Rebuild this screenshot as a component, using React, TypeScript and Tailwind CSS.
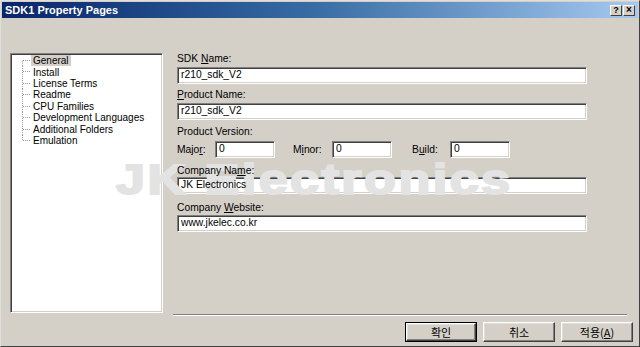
import React from "react";

const treeItems = [
  "General",
  "Install",
  "License Terms",
  "Readme",
  "CPU Families",
  "Development Languages",
  "Additional Folders",
  "Emulation",
];

function Field({ value, w }: { value: string; w: string }) {
  return (
    <div
      className={`${w} h-[17px] bg-white border border-t-[#808080] border-l-[#808080] border-r-white border-b-white shadow-[inset_1px_1px_0_#404040,inset_-1px_-1px_0_#d4d0c8] flex items-center pl-[3px]`}
    >
      <span className="relative z-10 text-[10.3px] leading-none text-black whitespace-nowrap">{value}</span>
    </div>
  );
}

function Label({ children, cls }: { children: React.ReactNode; cls: string }) {
  return (
    <div className={`${cls} h-[13px] leading-[13px] text-[10.3px] text-black`}>
      <span className="relative z-10 whitespace-nowrap">{children}</span>
    </div>
  );
}

function Btn({ children, def }: { children: React.ReactNode; def?: boolean }) {
  return (
    <div
      className={
        def
          ? "w-[72px] h-[20px] border border-black flex"
          : "w-[72px] h-[20px] flex"
      }
    >
      <div className="flex-1 border border-t-white border-l-white border-r-[#404040] border-b-[#404040] shadow-[inset_-1px_-1px_0_#808080,inset_1px_1px_0_#dfdfdf] flex items-center justify-center">
        <span className="relative z-10 text-[11px] leading-none text-black font-['Noto_Sans_CJK_KR','Liberation_Sans',sans-serif]">
          {children}
        </span>
      </div>
    </div>
  );
}

export default function App() {
  return (
    <div className="relative w-[640px] h-[347px] overflow-hidden bg-[#d4d0c8] border border-t-[#dfdfdf] border-l-[#dfdfdf] border-r-[#404040] border-b-[#404040] p-[1px] flex flex-col font-['Liberation_Sans',Arial,'Noto_Sans_CJK_KR',sans-serif]">
      {/* Title bar */}
      <div className="h-[16px] shrink-0 bg-gradient-to-r from-[#0a246a] via-[#3a6ea5] to-[#a6caf0] flex items-center justify-between pl-[3px] pr-[3px]">
        <span className="text-white font-bold text-[11px] leading-none">SDK1 Property Pages</span>
        <div className="flex gap-[1px]">
          <div className="w-[12px] h-[11px] bg-[#d4d0c8] border border-t-white border-l-white border-r-[#404040] border-b-[#404040] flex items-center justify-center text-[9px] font-bold leading-none text-black">?</div>
          <div className="w-[12px] h-[11px] bg-[#d4d0c8] border border-t-white border-l-white border-r-[#404040] border-b-[#404040] flex items-center justify-center text-[10px] font-bold leading-none text-black">×</div>
        </div>
      </div>

      {/* Body */}
      <div className="mt-[34px] flex items-start">
        {/* Tree */}
        <div className="mt-[1px] ml-[8px] w-[153px] h-[260px] shrink-0 bg-white border border-t-[#808080] border-l-[#808080] border-r-white border-b-white shadow-[inset_1px_1px_0_#404040,inset_-1px_-1px_0_#d4d0c8] pt-[1px] pl-[11px]">
          {treeItems.map((t, i) => (
            <div key={t} className="h-[11.43px] flex items-center">
              <svg width="9" height="11.43" className="shrink-0">
                <line
                  x1="0.5"
                  y1={i === 0 ? 5.7 : 0}
                  x2="0.5"
                  y2={i === treeItems.length - 1 ? 5.7 : 11.43}
                  stroke="#9a9a9a"
                  strokeWidth="1"
                  strokeDasharray="1 1"
                />
                <line x1="1" y1="5.5" x2="8" y2="5.5" stroke="#9a9a9a" strokeWidth="1" strokeDasharray="1 1" />
              </svg>
              <span
                className={
                  i === 0
                    ? "relative z-10 px-[2px] bg-[#d4d0c8] text-[10px] leading-[11px] text-black whitespace-nowrap"
                    : "relative z-10 px-[2px] text-[10px] leading-[11px] text-black whitespace-nowrap"
                }
              >
                {t}
              </span>
            </div>
          ))}
        </div>

        {/* Right column */}
        <div className="ml-[10px] w-[454px] h-[264px] flex flex-col">
          <div className="pl-[4px] flex flex-col">
            <Label cls="">
              SDK <span className="underline">N</span>ame:
            </Label>
            <div className="mt-[2px]">
              <Field value="r210_sdk_V2" w="w-[410px]" />
            </div>
            <Label cls="mt-[4px]">
              <span className="underline">P</span>roduct Name:
            </Label>
            <div className="mt-[2px]">
              <Field value="r210_sdk_V2" w="w-[410px]" />
            </div>
            <Label cls="mt-[5px]">Product Version:</Label>
            <div className="mt-[3px] flex items-center">
              <Label cls="w-[38px]">
                Majo<span className="underline">r</span>:
              </Label>
              <Field value="0" w="w-[60px]" />
              <Label cls="ml-[18px] w-[39px]">
                M<span className="underline">i</span>nor:
              </Label>
              <Field value="0" w="w-[60px]" />
              <Label cls="ml-[20px] w-[38px]">
                B<span className="underline">u</span>ild:
              </Label>
              <Field value="0" w="w-[60px]" />
            </div>
            <Label cls="mt-[6px]">
              Company Na<span className="underline">m</span>e:
            </Label>
            <div>
              <Field value="JK Electronics" w="w-[410px]" />
            </div>
            <Label cls="mt-[7px]">
              Company <span className="underline">W</span>ebsite:
            </Label>
            <div className="mt-[1px]">
              <Field value="www.jkelec.co.kr" w="w-[410px]" />
            </div>
          </div>
          <div className="mt-auto h-[2px] border-t border-t-[#808080] border-b border-b-white" />
        </div>
      </div>

      {/* Buttons */}
      <div className="mt-[6px] flex justify-end gap-[6px] pr-[5px]">
        <Btn def>확인</Btn>
        <Btn>취소</Btn>
        <Btn>
          적용(<span className="underline">A</span>)
        </Btn>
      </div>

      {/* Watermark */}
      <div className="absolute left-[115px] top-[158px] origin-left scale-x-[1.24] text-[42px] leading-none font-bold tracking-[2px] text-[#e3e3e3] [-webkit-text-stroke:2px_#e3e3e3] whitespace-nowrap pointer-events-none select-none font-['Liberation_Sans',Arial,sans-serif]">
        JK Electronics
      </div>
    </div>
  );
}
